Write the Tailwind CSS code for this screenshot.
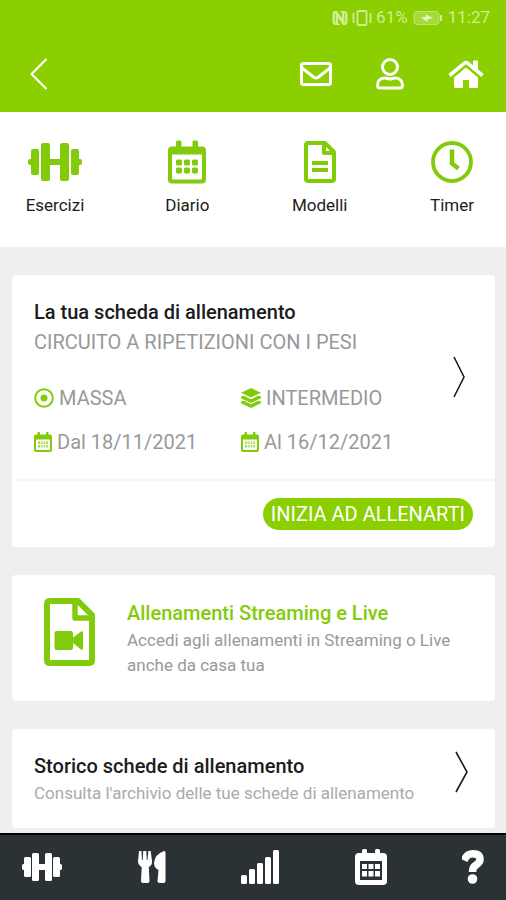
<!DOCTYPE html>
<html lang="it">
<head>
<meta charset="utf-8">
<meta name="viewport" content="width=device-width, initial-scale=1">
<title>Allenamento</title>
<script src="https://cdn.jsdelivr.net/npm/@tailwindcss/browser@4"></script>
</head>
<body class="flex min-h-screen flex-col bg-[#efefef] font-['Roboto',sans-serif] text-[#1c1c1c]">
<svg class="hidden" aria-hidden="true">
  <symbol id="dumbbell" viewBox="0 0 54 38">
    <rect x="0" y="16" width="5" height="6" rx="2"/><rect x="49" y="16" width="5" height="6" rx="2"/>
    <rect x="3" y="6" width="8" height="26" rx="2"/><rect x="43" y="6" width="8" height="26" rx="2"/>
    <rect x="13" y="0" width="9" height="38" rx="2"/><rect x="32" y="0" width="9" height="38" rx="2"/>
    <rect x="21" y="16" width="12" height="6"/>
  </symbol>
  <symbol id="calendar" viewBox="0 0 38 43">
    <path fill-rule="evenodd" d="M8 1.500Q8 0 9.500 0H12Q13.500 0 13.500 1.500V6H24.500V1.500Q24.500 0 26 0H28.500Q30 0 30 1.500V6H34Q38 6 38 10V39Q38 43 34 43H4Q0 43 0 39V10Q0 6 4 6H8ZM4 14V38Q4 39 5 39H33Q34 39 34 38V14Z"/>
    <rect x="8" y="19" width="6" height="6" rx="1.500"/><rect x="16" y="19" width="6" height="6" rx="1.500"/><rect x="24" y="19" width="6" height="6" rx="1.500"/>
    <rect x="8" y="27" width="6" height="6" rx="1.500"/><rect x="16" y="27" width="6" height="6" rx="1.500"/><rect x="24" y="27" width="6" height="6" rx="1.500"/>
  </symbol>
  <symbol id="calendar-small" viewBox="0 0 18 20">
    <path fill-rule="evenodd" d="M3.500 0.800Q3.500 0 4.300 0H5.200Q6 0 6 0.800V2.500H12V0.800Q12 0 12.800 0H13.700Q14.500 0 14.500 0.800V2.500H16Q18 2.500 18 4.500V18Q18 20 16 20H2Q0 20 0 18V4.500Q0 2.500 2 2.500H3.500ZM2 7.500V17Q2 18 3 18H15Q16 18 16 17V7.500Z"/>
    <path d="M4 9.500H6.200V12H4ZM7.200 9.500H8.700V12H7.200ZM9.700 9.500H11.200V12H9.700ZM12.200 9.500H14V12H12.200ZM4 13H6.200V15.500H4ZM7.200 13H8.700V15.500H7.200ZM9.700 13H11.200V15.500H9.700ZM12.200 13H14V15.500H12.200Z" opacity="0.700"/>
  </symbol>
</svg>

<header class="flex flex-col bg-[#8bcf00] text-white">
  <div class="flex h-9 items-center justify-end gap-1 pr-4 text-[17px] text-[#d0ed94]">
    <svg class="h-4 w-4" viewBox="0 0 16 16" fill="currentColor"><path d="M2 1H5L10 8V3Q8.500 2 7.500 1H13Q15.500 1.500 15.500 4V12Q15.500 14.500 13.500 15H11L6 8V13Q7.500 14 8.500 15H3Q0.500 14.500 0.500 12V4Q0.500 1.500 2 1Z"/><path d="M3.300 3.500V13M12.700 3V12.500" stroke="#8bcf00" stroke-width="0.800"/></svg>
    <svg class="h-4 w-5" viewBox="0 0 20 16" fill="none" stroke="currentColor" stroke-width="1.800"><rect x="5.500" y="1" width="9" height="14" rx="1"/><path d="M1.500 3V13M18.500 3V13"/></svg>
    <span>61%</span>
    <svg class="h-4 w-8" viewBox="0 0 32 16"><rect x="2" y="1.500" width="25" height="13" rx="3" fill="#a6da3c" stroke="#bfe472"/><path d="M28 5h2v6h-2z" fill="currentColor"/><path d="M9 7.500L14 6.500V4.500L21 8L15.500 9.500V12Z" fill="#e4f5c0"/></svg>
    <span>11:27</span>
  </div>
  <div class="flex h-[76px] items-center justify-between pr-[22px] pl-[30px]">
    <button type="button" aria-label="Indietro"><svg class="block h-8 w-[18px]" viewBox="0 0 18 32" fill="none" stroke="currentColor" stroke-width="2.200"><path d="M16.500 1L1.500 16L16.500 31"/></svg></button>
    <nav class="flex items-center gap-11">
      <a href="#messaggi" aria-label="Messaggi"><svg class="block h-6 w-8" viewBox="0 0 32 24" fill="none" stroke="currentColor" stroke-width="3" stroke-linejoin="round"><rect x="1.500" y="1.500" width="29" height="21" rx="2"/><path d="M2 6L13.500 15Q16 17 18.500 15L30 6"/></svg></a>
      <a href="#profilo" aria-label="Profilo"><svg class="block h-8 w-7" viewBox="0 0 28 32" fill="none" stroke="currentColor" stroke-width="3"><circle cx="14" cy="9" r="7.500"/><path d="M1.500 27C1.500 22.500 4.500 20 9 20C11 20 12 21 14 21S17 20 19 20C23.500 20 26.500 22.500 26.500 27Q26.500 30 24 30H4Q1.500 30 1.500 27Z"/></svg></a>
      <a href="#home" aria-label="Home"><svg class="block h-7 w-9" viewBox="0 0 36 28" fill="currentColor"><path d="M6 16.500L18 7L30 16.500V26.500Q30 28 28.500 28H22Q21 28 21 27V20H15V27Q15 28 14 28H7.500Q6 28 6 26.500Z"/><path d="M25 0.500H30V11L25 7Z"/><path d="M4 18.200L18 6.500L32 18.200" fill="none" stroke="#8bcf00" stroke-width="1.500"/><path d="M1.500 15.500L16.500 3.200Q18 2 19.500 3.200L34.500 15.500" fill="none" stroke="currentColor" stroke-width="3.600"/></svg></a>
    </nav>
  </div>
</header>

<nav class="flex justify-between bg-white pt-7 pr-6 pb-[30px] pl-[25px] text-[17px] leading-6">
  <a href="#esercizi" class="flex w-15 flex-col items-center gap-[9px]"><svg class="h-11 w-[54px] py-[3px] fill-[#81cb0b]"><use href="#dumbbell"/></svg>Esercizi</a>
  <a href="#diario" class="flex w-15 flex-col items-center gap-[9px]"><svg class="h-11 w-[38px] fill-[#81cb0b]"><use href="#calendar"/></svg>Diario</a>
  <a href="#modelli" class="flex w-15 flex-col items-center gap-[9px]"><svg class="h-11 w-8" viewBox="0 0 32 44" fill="none" stroke="#81cb0b" stroke-width="4"><path d="M4 3H21L30 12V39Q30 41 28 41H4Q2 41 2 39V5Q2 3 4 3ZM20 3V13H30" stroke-linejoin="round"/><path d="M8 23H24M8 30H24"/></svg>Modelli</a>
  <a href="#timer" class="flex w-15 flex-col items-center gap-[9px]"><svg class="h-11 w-[42px]" viewBox="0 0 42 44" fill="none" stroke="#81cb0b"><circle cx="21" cy="22" r="19" stroke-width="3.800"/><path d="M21 9.500V23.500L27.500 28.500" stroke-width="4.500"/></svg>Timer</a>
</nav>

<main class="flex flex-1 flex-col gap-7 pt-7 pr-[11px] pb-[5px] pl-3 text-[#999]">
  <section class="rounded bg-white">
    <div class="flex items-center justify-between border-b-2 border-[#f7f7f7] pt-[22px] pr-[30px] pb-[22px] pl-[22px]">
      <div class="flex-1">
        <h2 class="text-[20px] leading-[30px] font-medium text-[#1c1c1c]">La tua scheda di allenamento</h2>
        <p class="text-[20px] leading-[30px]">CIRCUITO A RIPETIZIONI CON I PESI</p>
        <ul class="mt-[26px] grid grid-cols-[207px_1fr] gap-y-[14px] text-[20px] leading-[30px]">
          <li class="flex items-center gap-[5px]"><svg class="h-5 w-5" viewBox="0 0 20 20" fill="none" stroke="#81cb0b" stroke-width="2"><circle cx="10" cy="10" r="8.800"/><circle cx="10" cy="10" r="3.500" fill="#81cb0b" stroke="none"/></svg>MASSA</li>
          <li class="flex items-center gap-[5px]"><svg class="h-5 w-5" viewBox="0 0 20 20" fill="#81cb0b"><path d="M10 0L20 4.700L10 9.400L0 4.700Z"/><path d="M0 8.500L3 7.800L10 11.200L17 7.800L20 8.500V10.200L10 15L0 10.200Z"/><path d="M0 13.500L3 12.800L10 16.200L17 12.800L20 13.500V15.300L10 20L0 15.300Z"/></svg>INTERMEDIO</li>
          <li class="flex items-center gap-[5px]"><svg class="h-5 w-[18px] fill-[#81cb0b]"><use href="#calendar-small"/></svg>Dal 18/11/2021</li>
          <li class="flex items-center gap-[5px]"><svg class="h-5 w-[18px] fill-[#81cb0b]"><use href="#calendar-small"/></svg>Al 16/12/2021</li>
        </ul>
      </div>
      <a href="#scheda" aria-label="Apri la scheda"><svg class="block h-[42px] w-3" viewBox="0 0 12 42" fill="none" stroke="#1c1c1c" stroke-width="1.600"><path d="M1 1L11 21L1 41"/></svg></a>
    </div>
    <div class="flex justify-end pt-[17px] pr-[22px] pb-[17px]">
      <button type="button" class="rounded-full bg-[#8bcf00] px-2 text-[20px] leading-8 text-white">INIZIA AD ALLENARTI</button>
    </div>
  </section>

  <a href="#streaming" class="flex rounded bg-white pt-[23px] pr-[30px] pb-[23px] pl-8 text-[17px] leading-[25px]">
    <svg class="mr-8 h-[68px] w-[51px] shrink-0" viewBox="0 0 51 68" fill="none" stroke="#81cb0b" stroke-width="6" stroke-linejoin="round"><path d="M6 3H34L48 17V62Q48 65 45 65H6Q3 65 3 62V6Q3 3 6 3Z"/><path d="M31 3V20H48" stroke-width="5.500"/><path fill="#81cb0b" stroke="none" d="M12.500 33H27Q29 33 29 35V39.500L37 33.500Q39 32.500 39 34.500V50.500Q39 52.500 37 51.500L29 45V50Q29 52 27 52H12.500Q10.500 52 10.500 50V35Q10.500 33 12.500 33Z"/></svg>
    <div>
      <h2 class="text-[20px] leading-[30px] font-medium text-[#81cb0b]">Allenamenti Streaming e Live</h2>
      <p>Accedi agli allenamenti in Streaming o Live anche da casa tua</p>
    </div>
  </a>

  <a href="#storico" class="flex items-start justify-between rounded bg-white pt-[22px] pr-[27px] pb-[22px] pl-[22px] text-[17px] leading-[25px]">
    <div>
      <h2 class="text-[20px] leading-[30px] font-medium text-[#1c1c1c]">Storico schede di allenamento</h2>
      <p class="text-[#aaa]">Consulta l'archivio delle tue schede di allenamento</p>
    </div>
    <svg class="h-[42px] w-[13px] shrink-0" viewBox="0 0 13 42" fill="none" stroke="#1c1c1c" stroke-width="1.600"><path d="M1 1L12 21L1 41"/></svg>
  </a>
</main>

<footer class="sticky bottom-0 border-t-2 border-black bg-[#2b3235]">
  <nav class="flex h-[65px] items-center justify-between px-[22px] pb-0.5 text-white">
    <a href="#esercizi" aria-label="Esercizi"><svg class="block h-7 w-10" viewBox="0 0 40 28" fill="currentColor"><rect x="0" y="11" width="4" height="6" rx="1.500"/><rect x="36" y="11" width="4" height="6" rx="1.500"/><rect x="2" y="4" width="7" height="20" rx="1.500"/><rect x="31" y="4" width="7" height="20" rx="1.500"/><rect x="10" y="0" width="7" height="28" rx="1.500"/><rect x="23" y="0" width="7" height="28" rx="1.500"/><rect x="16" y="11" width="8" height="6"/></svg></a>
    <a href="#dieta" aria-label="Dieta"><svg class="block h-8 w-7" viewBox="0 0 28 32" fill="currentColor"><path d="M1 0H3.500L4 9H4.700L5.200 0H8.300L8.800 9H9.500L10.300 0H12.700L14 10Q14.500 14 10.800 16L11.500 30Q11.500 32 9.500 32H5Q3 32 3 30L3.700 16Q0 14 0 10Z"/><path d="M27.500 1.500V30Q27.500 32 25.500 32H21.500Q19.500 32 19.500 30L20.500 19Q16 17 16 12Q17 3 26 0Q27.500 0 27.500 1.500Z"/></svg></a>
    <a href="#progressi" aria-label="Progressi"><svg class="block h-[34px] w-[38px]" viewBox="0 0 38 34" fill="currentColor"><rect x="0" y="25" width="6" height="9" rx="1.500"/><rect x="8" y="19" width="6" height="15" rx="1.500"/><rect x="16" y="13" width="6" height="21" rx="1.500"/><rect x="24" y="7" width="6" height="27" rx="1.500"/><rect x="32" y="0" width="6" height="34" rx="1.500"/></svg></a>
    <a href="#diario" aria-label="Diario"><svg class="block h-9 w-8" viewBox="0 0 32 36" fill="currentColor"><path fill-rule="evenodd" d="M7 1.500Q7 0 8.500 0H10.500Q12 0 12 1.500V4H20V1.500Q20 0 21.500 0H23.500Q25 0 25 1.500V4H28Q32 4 32 8V32Q32 36 28 36H4Q0 36 0 32V8Q0 4 4 4H7ZM5 12V31H27V12Z"/><path d="M7 15H12V20H7ZM13.500 15H18.500V20H13.500ZM20 15H25V20H20ZM7 22H12V27.500H7ZM13.500 22H18.500V27.500H13.500ZM20 22H25V27.500H20Z"/></svg></a>
    <a href="#aiuto" aria-label="Aiuto"><svg class="block h-[34px] w-[22px]" viewBox="0 0 22 34" fill="none" stroke="currentColor" stroke-width="7.500"><path d="M2 10.500Q5 3.800 10.500 3.800Q18 3.800 18 9.500Q18 12.500 14 15Q10.500 17 10.500 22"/><circle cx="10.500" cy="29" r="4.800" fill="currentColor" stroke="none"/></svg></a>
  </nav>
</footer>
</body>
</html>
